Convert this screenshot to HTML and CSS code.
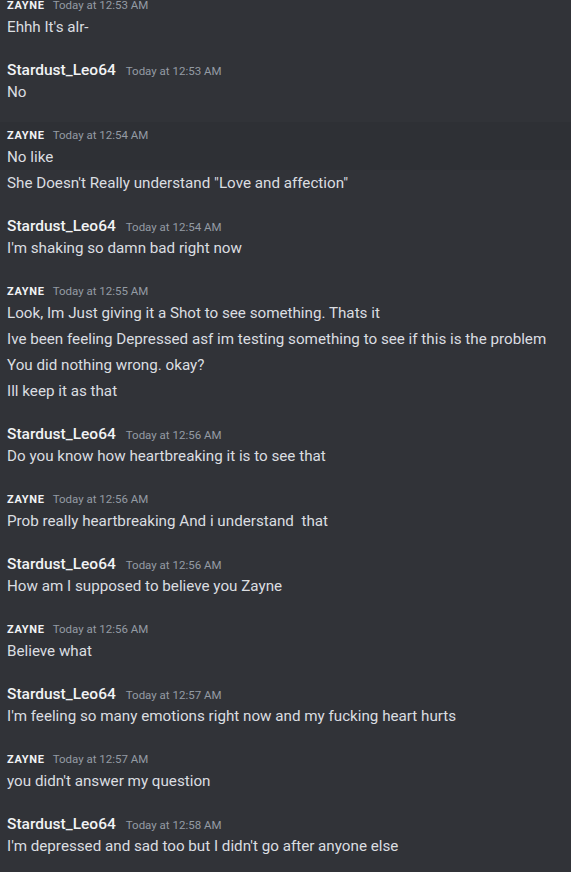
FILE: index.html
```html
<!DOCTYPE html>
<html lang="en">
<head>
  <meta charset="UTF-8" />
  <title>Chat</title>
  <link rel="stylesheet" href="styles.css">
</head>
<body>
  <div class="chat">
    <!-- 12:53 -->
    <div class="group first">
      <div class="msg"><div class="head"><span class="name caps">ZAYNE</span><span class="time">Today at 12:53 AM</span></div>
        <div class="text">Ehhh It's alr-</div></div>
    </div>

    <div class="group">
      <div class="msg"><div class="head"><span class="name">Stardust_Leo64</span><span class="time">Today at 12:53 AM</span></div>
        <div class="text">No</div></div>
    </div>

    <div class="group">
      <div class="msg hover"><div class="head"><span class="name caps">ZAYNE</span><span class="time">Today at 12:54 AM</span></div>
        <div class="text">No like</div></div>
      <div class="msg"><div class="text">She Doesn't Really understand "Love and affection"</div></div>
    </div>

    <div class="group">
      <div class="msg"><div class="head"><span class="name">Stardust_Leo64</span><span class="time">Today at 12:54 AM</span></div>
        <div class="text">I'm shaking so damn bad right now</div></div>
    </div>

    <div class="group">
      <div class="msg"><div class="head"><span class="name caps">ZAYNE</span><span class="time">Today at 12:55 AM</span></div>
        <div class="text">Look, Im Just giving it a Shot to see something. Thats it</div></div>
      <div class="msg"><div class="text">Ive been feeling Depressed asf im testing something to see if this is the problem</div></div>
      <div class="msg"><div class="text">You did nothing wrong. okay?</div></div>
      <div class="msg"><div class="text">Ill keep it as that</div></div>
    </div>

    <div class="group">
      <div class="msg"><div class="head"><span class="name">Stardust_Leo64</span><span class="time">Today at 12:56 AM</span></div>
        <div class="text">Do you know how heartbreaking it is to see that</div></div>
    </div>

    <div class="group">
      <div class="msg"><div class="head"><span class="name caps">ZAYNE</span><span class="time">Today at 12:56 AM</span></div>
        <div class="text">Prob really heartbreaking And i understand &nbsp;that</div></div>
    </div>

    <div class="group">
      <div class="msg"><div class="head"><span class="name">Stardust_Leo64</span><span class="time">Today at 12:56 AM</span></div>
        <div class="text">How am I supposed to believe you Zayne</div></div>
    </div>

    <div class="group">
      <div class="msg"><div class="head"><span class="name caps">ZAYNE</span><span class="time">Today at 12:56 AM</span></div>
        <div class="text">Believe what</div></div>
    </div>

    <div class="group">
      <div class="msg"><div class="head"><span class="name">Stardust_Leo64</span><span class="time">Today at 12:57 AM</span></div>
        <div class="text">I'm feeling so many emotions right now and my fucking heart hurts</div></div>
    </div>

    <div class="group">
      <div class="msg"><div class="head"><span class="name caps">ZAYNE</span><span class="time">Today at 12:57 AM</span></div>
        <div class="text">you didn't answer my question</div></div>
    </div>

    <div class="group">
      <div class="msg"><div class="head"><span class="name">Stardust_Leo64</span><span class="time">Today at 12:58 AM</span></div>
        <div class="text">I'm depressed and sad too but I didn't go after anyone else</div></div>
    </div>
  </div>
</body>
</html>
```

FILE: styles.css
```css
html, body {
  margin: 0;
  height: 100%;
  overflow: hidden;
}

body {
  font-family: Roboto, 'Noto Sans', sans-serif;
  background-color: #313338;
  color: #dbdee1;
}

.chat {
  display: flex;
  flex-direction: column;
}

.group {
  margin-top: 17px;
}

/* the view is scrolled, so the first header is half cut off */
.group.first {
  margin-top: -8px;
}

.msg {
  padding: 2px 7px;
}

.msg.hover {
  background-color: #2e3035;
}

.head {
  display: flex;
  align-items: baseline;
  height: 22px;
  line-height: 22px;
}

.name {
  color: #f2f3f5;
  font-size: 15.5px;
  font-weight: 500;
  margin-right: 10px;
}

.name.caps {
  font-size: 11px;
  font-weight: 700;
  letter-spacing: 0.7px;
  margin-right: 8px;
}

.time {
  color: #949ba4;
  font-size: 11.5px;
}

.text {
  font-size: 15.2px;
  line-height: 22px;
}
```
